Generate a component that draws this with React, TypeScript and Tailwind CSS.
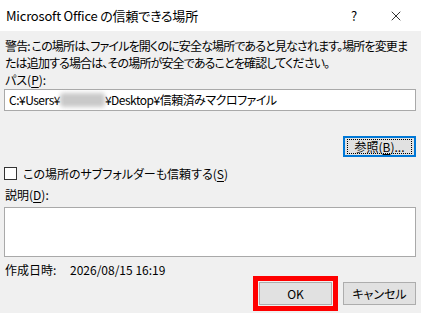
import { X } from 'lucide-react';

const FONT = "font-['Segoe_UI','Noto_Sans_CJK_JP',sans-serif] [font-feature-settings:'palt']";

function Key({ k }: { k: string }) {
  return (
    <>
      (<span className="underline underline-offset-2">{k}</span>)
    </>
  );
}

export default function App() {
  return (
    <div className={`w-[421px] h-[313px] bg-[#f0f0f0] text-black text-[12px] flex flex-col ${FONT}`}>
      {/* title bar */}
      <div className="h-[31px] bg-white flex items-center shrink-0">
        <span className="pl-[6px] text-[13px] tracking-[-0.2px] flex-1">Microsoft Office の信頼できる場所</span>
        <span className="w-[16px] text-center text-[13px] mr-[26px]">?</span>
        <X size={16} strokeWidth={1.2} className="mr-[17px]" />
      </div>

      <div className="flex flex-col pl-[4px] pr-[5px]">
        <p className="pt-[6px] pl-[1px] leading-[17px] whitespace-nowrap tracking-[-0.85px]">
          警告: この場所は、ファイルを開くのに安全な場所であると見なされます。場所を変更ま
          <br />
          たは追加する場合は、その場所が安全であることを確認してください。
        </p>

        <div className="leading-[17px] pl-[1px]">
          パス<Key k="P" />:
        </div>
        <div className="mt-[1px] h-[22px] bg-white border border-[#a9a9a9] flex items-center pl-[4px] tracking-[-0.5px]">
          <span>C:¥Users¥</span>
          <span className="w-[45px] h-[14px] bg-[#c9c9c9] blur-[2px] rounded-sm" />
          <span>¥Desktop¥信頼済みマクロファイル</span>
        </div>

        <div className="flex justify-end mt-[25px]">
          <button className="w-[73px] h-[21px] bg-[#e1e1e1] border-2 border-[#0078d7] flex items-center justify-center">
            <span className="w-[65px] h-[15px] border border-dotted border-black flex items-center justify-center leading-none">
              参照<Key k="B" />...
            </span>
          </button>
        </div>

        <label className="flex items-center mt-[10px] h-[13px]">
          <span className="w-[13px] h-[13px] border border-[#333] bg-white" />
          <span className="ml-[6px]">
            この場所のサブフォルダーも信頼する<Key k="S" />
          </span>
        </label>

        <div className="mt-[6px] leading-[17px] pl-[1px]">
          説明<Key k="D" />:
        </div>
        <div className="mt-[4px] h-[50px] bg-white border border-[#a9a9a9]" />

        <div className="mt-[4px] leading-[17px] pl-[1px] flex">
          <span className="w-[65px]">作成日時:</span>
          <span>2026/08/15 16:19</span>
        </div>

        <div className="flex justify-end gap-[11px] mt-[4px]">
          <button className="w-[73px] h-[23px] bg-[#e1e1e1] border border-[#adadad] outline-[5px] outline-solid outline-[#ff0000] outline-offset-[1px]">
            OK
          </button>
          <button className="w-[73px] h-[23px] bg-[#e1e1e1] border border-[#adadad]">キャンセル</button>
        </div>
      </div>
    </div>
  );
}
